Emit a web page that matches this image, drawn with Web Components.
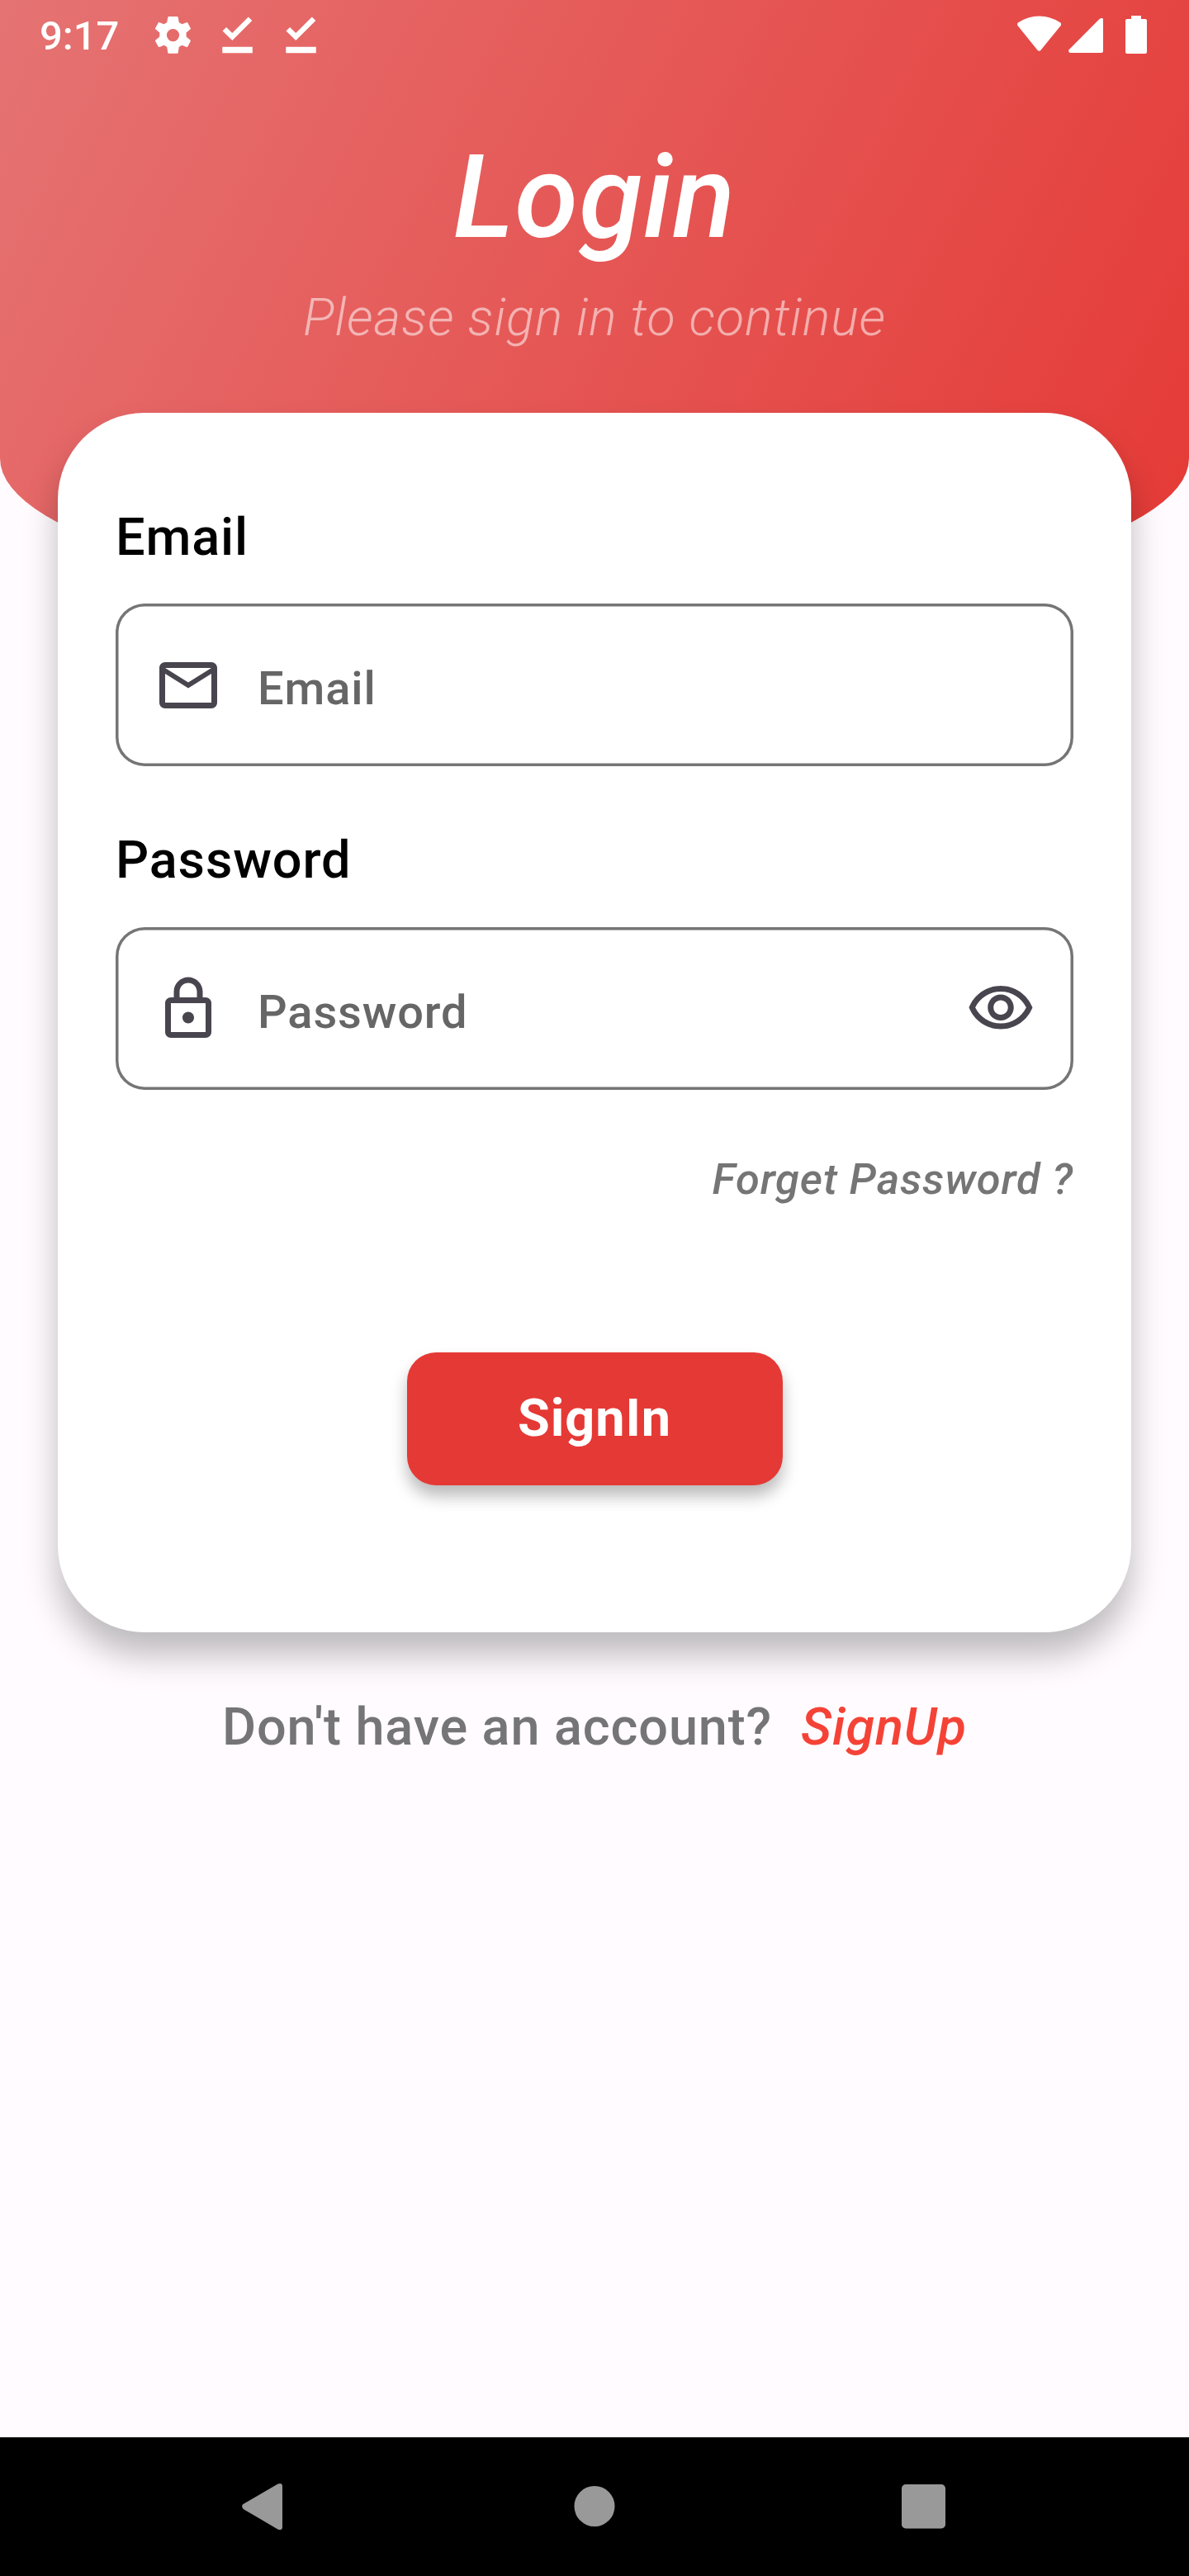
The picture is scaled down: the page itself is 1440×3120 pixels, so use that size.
<!DOCTYPE html>
<html lang="en">
<head>
<meta charset="utf-8">
<title>Login</title>
<style>
  html, body { margin: 0; padding: 0; background: #fffbff; }
  body { font-family: Roboto, sans-serif; width: 1440px; height: 3120px; overflow: hidden; }
</style>
</head>
<body>
<login-screen></login-screen>
<script>
const define = (name, html) => {
  const template = document.createElement('template');
  template.innerHTML = html;
  customElements.define(name, class extends HTMLElement {
    constructor() {
      super();
      this.attachShadow({ mode: 'open' }).append(template.content.cloneNode(true));
    }
  });
};

/* Icon paths on Material's 24-unit grid */
const ICONS = {
  mail: 'M22 6c0-1.1-.9-2-2-2H4c-1.1 0-2 .9-2 2v12c0 1.1.9 2 2 2h16c1.1 0 2-.9 2-2V6zm-2 0l-8 5-8-5h16zm0 12H4V8l8 5 8-5v10z',
  lock: 'M18 8h-1V6c0-2.76-2.24-5-5-5S7 3.24 7 6v2H6c-1.1 0-2 .9-2 2v10c0 1.1.9 2 2 2h12c1.1 0 2-.9 2-2V10c0-1.1-.9-2-2-2zM9 6c0-1.66 1.34-3 3-3s3 1.34 3 3v2H9V6zm9 14H6V10h12v10zm-6-3c1.1 0 2-.9 2-2s-.9-2-2-2-2 .9-2 2 .9 2 2 2z',
  eye: 'M12 6c3.79 0 7.17 2.13 8.82 5.5C19.17 14.87 15.79 17 12 17s-7.17-2.13-8.82-5.5C4.83 8.13 8.21 6 12 6m0-2C7 4 2.73 7.11 1 11.5 2.73 15.89 7 19 12 19s9.27-3.11 11-7.5C21.27 7.11 17 4 12 4zm0 5c1.38 0 2.5 1.12 2.5 2.5S13.38 14 12 14s-2.5-1.12-2.5-2.5S10.62 9 12 9m0-2c-2.48 0-4.5 2.02-4.5 4.5S9.52 16 12 16s4.5-2.02 4.5-4.5S14.48 7 12 7z'
};

customElements.define('md-icon', class extends HTMLElement {
  constructor() {
    super();
    this.attachShadow({ mode: 'open' });
  }
  connectedCallback() {
    this.shadowRoot.innerHTML = `
      <style>:host { display: block; flex: none; width: 84px; height: 84px; color: #49454f; } svg { display: block; }</style>
      <svg width="84" height="84" viewBox="0 0 24 24"><path fill="currentColor" d="${ICONS[this.getAttribute('name')]}"/></svg>`;
  }
});

define('status-bar', `
  <style>
    :host { display: flex; height: 84px; box-sizing: border-box; padding: 0 51px 0 48px; color: #fff; text-align: left; }
    .clock { font-size: 49px; line-height: 58px; font-weight: 500; padding-top: 15px; width: 139px; }
    svg { display: block; flex: none; fill: #fff; }
    .grow { flex: 1; }
  </style>
  <span class="clock">9:17</span>
  <svg width="44" height="84" viewBox="187 0 44 84"><path fill-rule="evenodd" d="M204.5 20h10q1 0 1.2 1l1.1 6.2 3.7 2.1 5.3-2.1q1-.4 1.6.6l3.3 6.2q.5 1-.3 1.6l-4.8 3.8v5.2l4.8 3.8q.8.6.3 1.6l-3.3 6.3q-.6 1-1.6.6l-5.3-2.2-3.7 2.1-1.1 6.9q-.2 1-1.2 1h-10q-1 0-1.200-1l-1.1-6.900-3.700-2.100-5.300 2.200q-1 .4-1.600-.6l-3.400-6.300q-.5-1 .3-1.600l4.800-3.800v-5.200l-4.800-3.800q-.8-.6-.3-1.600l3.400-6.200q.6-1 1.600-.6l5.300 2.100 3.700-2.100 1.100-6.200q.2-1 1.200-1zM209.500 35a7.600 7.600 0 1 0 0 15.200a7.600 7.600 0 1 0 0-15.200z"/></svg>
  <svg style="margin-left:38px" width="37" height="84" viewBox="268.500 0 37 84"><path d="M269 37.500l4.600-4.600 7.200 7.200L300.300 20.500l4.500 4.600-24 24zM268.800 56.800h36.500v7.400h-36.500z"/></svg>
  <svg style="margin-left:40px" width="37" height="84" viewBox="268.500 0 37 84"><path d="M269 37.500l4.600-4.600 7.200 7.200L300.300 20.500l4.500 4.600-24 24zM268.800 56.800h36.500v7.400h-36.500z"/></svg>
  <span class="grow"></span>
  <svg width="157" height="84" viewBox="1232 0 157 84">
    <path d="M1232.700 31.200Q1231.300 29 1233.400 27.300Q1245 19.500 1258.500 19.500Q1272 19.500 1283.900 27.300Q1286 29 1284.500 31.200L1260.700 60.500Q1258.500 63 1256.300 60.500z"/>
    <path d="M1294.600 60.200L1331.800 22.800Q1333.700 21.300 1336 22.500V61.700Q1336 64 1333.700 64H1296.500Q1293.300 63.500 1294.600 60.200z"/>
    <path d="M1370 19h12v4h5q2 0 2 2v38q0 2-2 2h-22q-2 0-2-2V25q0-2 2-2h5z"/>
  </svg>`);

define('login-header', `
  <style>
    :host {
      display: block; height: 736px; text-align: center; color: #fff;
      background: linear-gradient(117.07deg, #e57373, #e53935);
      border-radius: 0 0 720px 720px / 0 0 181px 181px;
    }
    h1 { margin: 73px 0 26.500px; font-size: 140px; line-height: 164px; font-weight: 500; font-style: italic; letter-spacing: .875px; }
    p { margin: 0; font-size: 63px; line-height: 74px; font-weight: 300; font-style: italic; letter-spacing: .875px; color: rgba(255,255,255,.54); }
  </style>
  <status-bar></status-bar>
  <h1>Login</h1>
  <p>Please sign in to continue</p>`);

define('login-field', `
  <style>
    :host { display: block; }
    .label { display: block; font-size: 63px; line-height: 74px; font-weight: 500; letter-spacing: .875px; color: #000; }
    .box {
      display: flex; align-items: center; gap: 42px; height: 196.500px; box-sizing: border-box; margin-top: 43.800px;
      padding: 0 46px; border-radius: 35px; box-shadow: inset 0 0 0 3.500px #757575;
    }
    .hint { flex: 1; padding-top: 9px; font-size: 56px; line-height: 66px; font-weight: 500; letter-spacing: .875px; color: #666; }
  </style>
  <span class="label"><slot name="label"></slot></span>
  <div class="box"><slot name="leading"></slot><span class="hint"><slot></slot></span><slot name="trailing"></slot></div>`);

define('login-button', `
  <style>
    :host { display: block; }
    button {
      display: block; width: 455px; height: 161px; margin: 0 auto; padding: 0; border: 0; border-radius: 35px;
      background: #e53935; color: #fff; font: 700 63px/74px Roboto, sans-serif; letter-spacing: .875px;
      box-shadow: 0 13px 19px rgba(0,0,0,.27);
    }
  </style>
  <button><slot></slot></button>`);

define('login-card', `
  <style>
    :host {
      display: block; box-sizing: border-box; width: 1300px; height: 1476.400px; margin: -235.700px auto 0;
      padding: 113.200px 70px 0; border-radius: 105px; background: #fff; position: relative;
      box-shadow: 0 28px 40px rgba(0,0,0,.26);
    }
    .second { margin-top: 77.700px; }
    .forget { margin-top: 77px; text-align: right; font-size: 52.500px; line-height: 62px; font-weight: 500; font-style: italic; letter-spacing: .875px; color: #757575; }
    login-button { margin-top: 179.200px; }
  </style>
  <login-field><span slot="label">Email</span><md-icon slot="leading" name="mail"></md-icon>Email</login-field>
  <login-field class="second"><span slot="label">Password</span><md-icon slot="leading" name="lock"></md-icon>Password<md-icon slot="trailing" name="eye"></md-icon></login-field>
  <div class="forget">Forget Password ?</div>
  <login-button>SignIn</login-button>`);

define('signup-prompt', `
  <style>
    :host { display: flex; justify-content: center; gap: 35px; margin-top: 78px; font-size: 63px; line-height: 74px; font-weight: 500; letter-spacing: .875px; color: #757477; position: relative; }
    a { color: #f44336; font-style: italic; }
  </style>
  <span>Don't have an account?</span><a>SignUp</a>`);

define('nav-bar', `
  <style>
    :host { display: flex; align-items: center; justify-content: space-between; height: 168px; box-sizing: border-box; padding: 0 295px 0 292px; background: #000; }
    svg { display: block; fill: #999; }
  </style>
  <svg width="55" height="60" viewBox="292 3006 55 60"><path d="M294 3033.200L336.500 3008.600Q342 3006.500 342 3011.500V3060.500Q342 3065.500 336.500 3063.400L294.800 3039Q292 3036 294 3033.200z"/></svg>
  <svg width="50" height="50" viewBox="0 0 50 50"><circle cx="25" cy="24.500" r="24.500"/></svg>
  <svg width="53" height="54" viewBox="0 0 53 54"><rect width="53" height="53.500" rx="5"/></svg>`);

define('login-screen', `
  <style>
    :host { display: flex; flex-direction: column; width: 1440px; height: 3120px; background: #fffbff; }
    login-header, login-card, signup-prompt, nav-bar { flex: none; }
    nav-bar { margin-top: auto; }
  </style>
  <login-header></login-header>
  <login-card></login-card>
  <signup-prompt></signup-prompt>
  <nav-bar></nav-bar>`);
</script>
</body>
</html>
